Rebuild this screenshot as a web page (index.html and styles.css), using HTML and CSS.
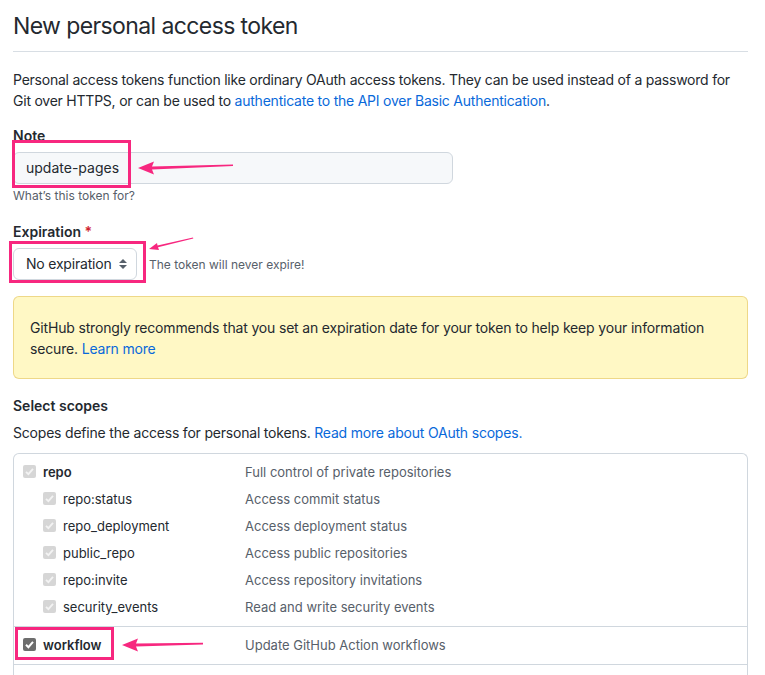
FILE: index.html
```html
<!DOCTYPE html>
<html>
<head>
<meta charset="utf-8">
<link rel="stylesheet" href="styles.css">
</head>
<body>
<div class="page">
  <h2 class="title">New personal access token</h2>
  <p class="intro">Personal access tokens function like ordinary OAuth access tokens. They can be used instead of a password for<br>Git over HTTPS, or can be used to <a href="#">authenticate to the API over Basic Authentication</a>.</p>

  <div class="field">
    <label class="label">Note</label>
    <div class="input">update-pages</div>
    <div class="hint">What’s this token for?</div>
  </div>

  <div class="field field-exp">
    <label class="label">Expiration <span class="req">*</span></label>
    <div class="exp-row">
      <div class="select"><span class="sel-text">No expiration</span>
        <svg class="caret" width="10" height="12" viewBox="0 0 10 12"><path d="M5 1 L9 5 H1 Z M5 11 L1 7 H9 Z" fill="#57606a"/></svg>
      </div>
      <span class="exp-note">The token will never expire!</span>
    </div>
  </div>

  <div class="flash">GitHub strongly recommends that you set an expiration date for your token to help keep your information<br>secure. <a href="#">Learn more</a></div>

  <h3 class="sub">Select scopes</h3>
  <p class="scopes-desc">Scopes define the access for personal tokens. <a href="#">Read more about OAuth scopes.</a></p>

  <div class="scopes">
    <div class="group">
      <div class="row">
        <div class="name"><span class="cb"><svg viewBox="0 0 13 13"><path d="M3 6.8 L5.4 9.2 L10 3.8" fill="none" stroke="#f3f3f3" stroke-width="1.8"/></svg></span><b>repo</b></div>
        <div class="desc">Full control of private repositories</div>
      </div>
      <div class="row child">
        <div class="name"><span class="cb"><svg viewBox="0 0 13 13"><path d="M3 6.8 L5.4 9.2 L10 3.8" fill="none" stroke="#f3f3f3" stroke-width="1.8"/></svg></span>repo:status</div>
        <div class="desc">Access commit status</div>
      </div>
      <div class="row child">
        <div class="name"><span class="cb"><svg viewBox="0 0 13 13"><path d="M3 6.8 L5.4 9.2 L10 3.8" fill="none" stroke="#f3f3f3" stroke-width="1.8"/></svg></span>repo_deployment</div>
        <div class="desc">Access deployment status</div>
      </div>
      <div class="row child">
        <div class="name"><span class="cb"><svg viewBox="0 0 13 13"><path d="M3 6.8 L5.4 9.2 L10 3.8" fill="none" stroke="#f3f3f3" stroke-width="1.8"/></svg></span>public_repo</div>
        <div class="desc">Access public repositories</div>
      </div>
      <div class="row child">
        <div class="name"><span class="cb"><svg viewBox="0 0 13 13"><path d="M3 6.8 L5.4 9.2 L10 3.8" fill="none" stroke="#f3f3f3" stroke-width="1.8"/></svg></span>repo:invite</div>
        <div class="desc">Access repository invitations</div>
      </div>
      <div class="row child">
        <div class="name"><span class="cb"><svg viewBox="0 0 13 13"><path d="M3 6.8 L5.4 9.2 L10 3.8" fill="none" stroke="#f3f3f3" stroke-width="1.8"/></svg></span>security_events</div>
        <div class="desc">Read and write security events</div>
      </div>
    </div>
    <div class="group">
      <div class="row">
        <div class="name"><span class="cb cb-on"><svg viewBox="0 0 13 13"><path d="M3 6.8 L5.4 9.2 L10 3.8" fill="none" stroke="#ffffff" stroke-width="2"/></svg></span><b>workflow</b></div>
        <div class="desc">Update GitHub Action workflows</div>
      </div>
    </div>
    <div class="group group-empty"></div>
  </div>
</div>

<div class="mark mark-note"></div>
<div class="mark mark-exp"></div>
<div class="mark mark-wf"></div>
<svg class="arrows" width="765" height="675" viewBox="0 0 765 675">
  <path d="M138 168 L154 161.5 L152 166.6 L233 164.5 L233 166 L152 169.6 L154 174.5 Z" fill="#f7277f"/>
  <path d="M149 249 L157 243 L157.5 245.6 L193 237.6 L193.3 238.6 L158 247.3 L159 250 Z" fill="#f7277f"/>
  <path d="M122 645 L138 638.5 L136 643.4 L203 642.8 L203 644.4 L136 646.6 L138 651.5 Z" fill="#f7277f"/>
</svg>
</body>
</html>
```
FILE: styles.css
```css
* { box-sizing: border-box; }
html, body { margin: 0; padding: 0; background: #ffffff; }
body {
  font-family: Inter, "Noto Sans", sans-serif;
  color: #24292f;
  font-size: 14px;
  position: relative;
  width: 765px;
  height: 675px;
  overflow: hidden;
}
a { color: #0969da; text-decoration: none; }
.page { padding: 0 17px 0 13px; }
.title {
  margin: 11px 0 0;
  font-size: 23px;
  font-weight: 400;
  line-height: 30px;
  padding-bottom: 10px;
  border-bottom: 1px solid #d8dee4;
  letter-spacing: -0.6px;
}
.intro {
  margin: 17px 0 0;
  line-height: 21px;
  letter-spacing: -0.23px;
  white-space: nowrap;
}
.field { margin-top: 15px; }
.field-exp { margin-top: 17px; }
.label {
  display: block;
  font-weight: 600;
  line-height: 20px;
  margin-bottom: 6px;
}
.req { color: #cf222e; }
.input {
  width: 440px;
  height: 32px;
  background: #f6f8fa;
  border: 1px solid #d0d7de;
  border-radius: 6px;
  padding: 0 12px;
  line-height: 30px;
}
.hint {
  margin-top: 3px;
  font-size: 12px;
  line-height: 18px;
  color: #57606a;
}
.exp-row { display: flex; align-items: center; gap: 12px; }
.select {
  width: 124px;
  height: 32px;
  border: 1px solid #d0d7de;
  border-radius: 6px;
  background: #ffffff;
  padding: 0 8px 0 12px;
  line-height: 30px;
  display: flex;
  align-items: center;
  justify-content: space-between;
  white-space: nowrap;
}
.sel-text { letter-spacing: -0.2px; }
.caret { flex: none; }
.exp-note { font-size: 12px; color: #57606a; }
.flash {
  margin-top: 16px;
  background: #fff8c5;
  border: 1px solid rgba(212, 167, 44, 0.4);
  border-radius: 6px;
  padding: 20px 16px 19px;
  line-height: 21px;
  white-space: nowrap;
  letter-spacing: -0.17px;
}
.sub {
  margin: 17px 0 0;
  font-size: 14px;
  font-weight: 600;
  line-height: 20px;
}
.scopes-desc {
  margin: 6px 0 0;
  line-height: 21px;
  letter-spacing: -0.2px;
}
.scopes {
  margin-top: 10px;
  border: 1px solid #d0d7de;
  border-radius: 6px 6px 0 0;
  border-bottom: none;
}
.group { padding: 4px 0 6px; border-bottom: 1px solid #d0d7de; }
.group-empty { height: 30px; border-bottom: none; }
.row {
  display: flex;
  align-items: center;
  height: 27px;
  font-size: 13px;
}
.name {
  width: 231px;
  padding-left: 9px;
  display: flex;
  align-items: center;
  gap: 7px;
}
.child .name { padding-left: 29px; }
.name b { font-weight: 600; }
.desc { color: #57606a; }
.cb {
  width: 13px;
  height: 13px;
  border-radius: 2px;
  background: #d6d6d6;
  flex: none;
  display: flex;
}
.cb svg { width: 13px; height: 13px; }
.cb-on { background: #6d6d6d; }

.mark {
  position: absolute;
  border: 3px solid #f7277f;
}
.mark-note { left: 12px; top: 140px; width: 119px; height: 48px; }
.mark-exp { left: 9px; top: 241px; width: 137px; height: 42px; }
.mark-wf { left: 15px; top: 627px; width: 99px; height: 33px; }
.arrows { position: absolute; left: 0; top: 0; pointer-events: none; }
```
